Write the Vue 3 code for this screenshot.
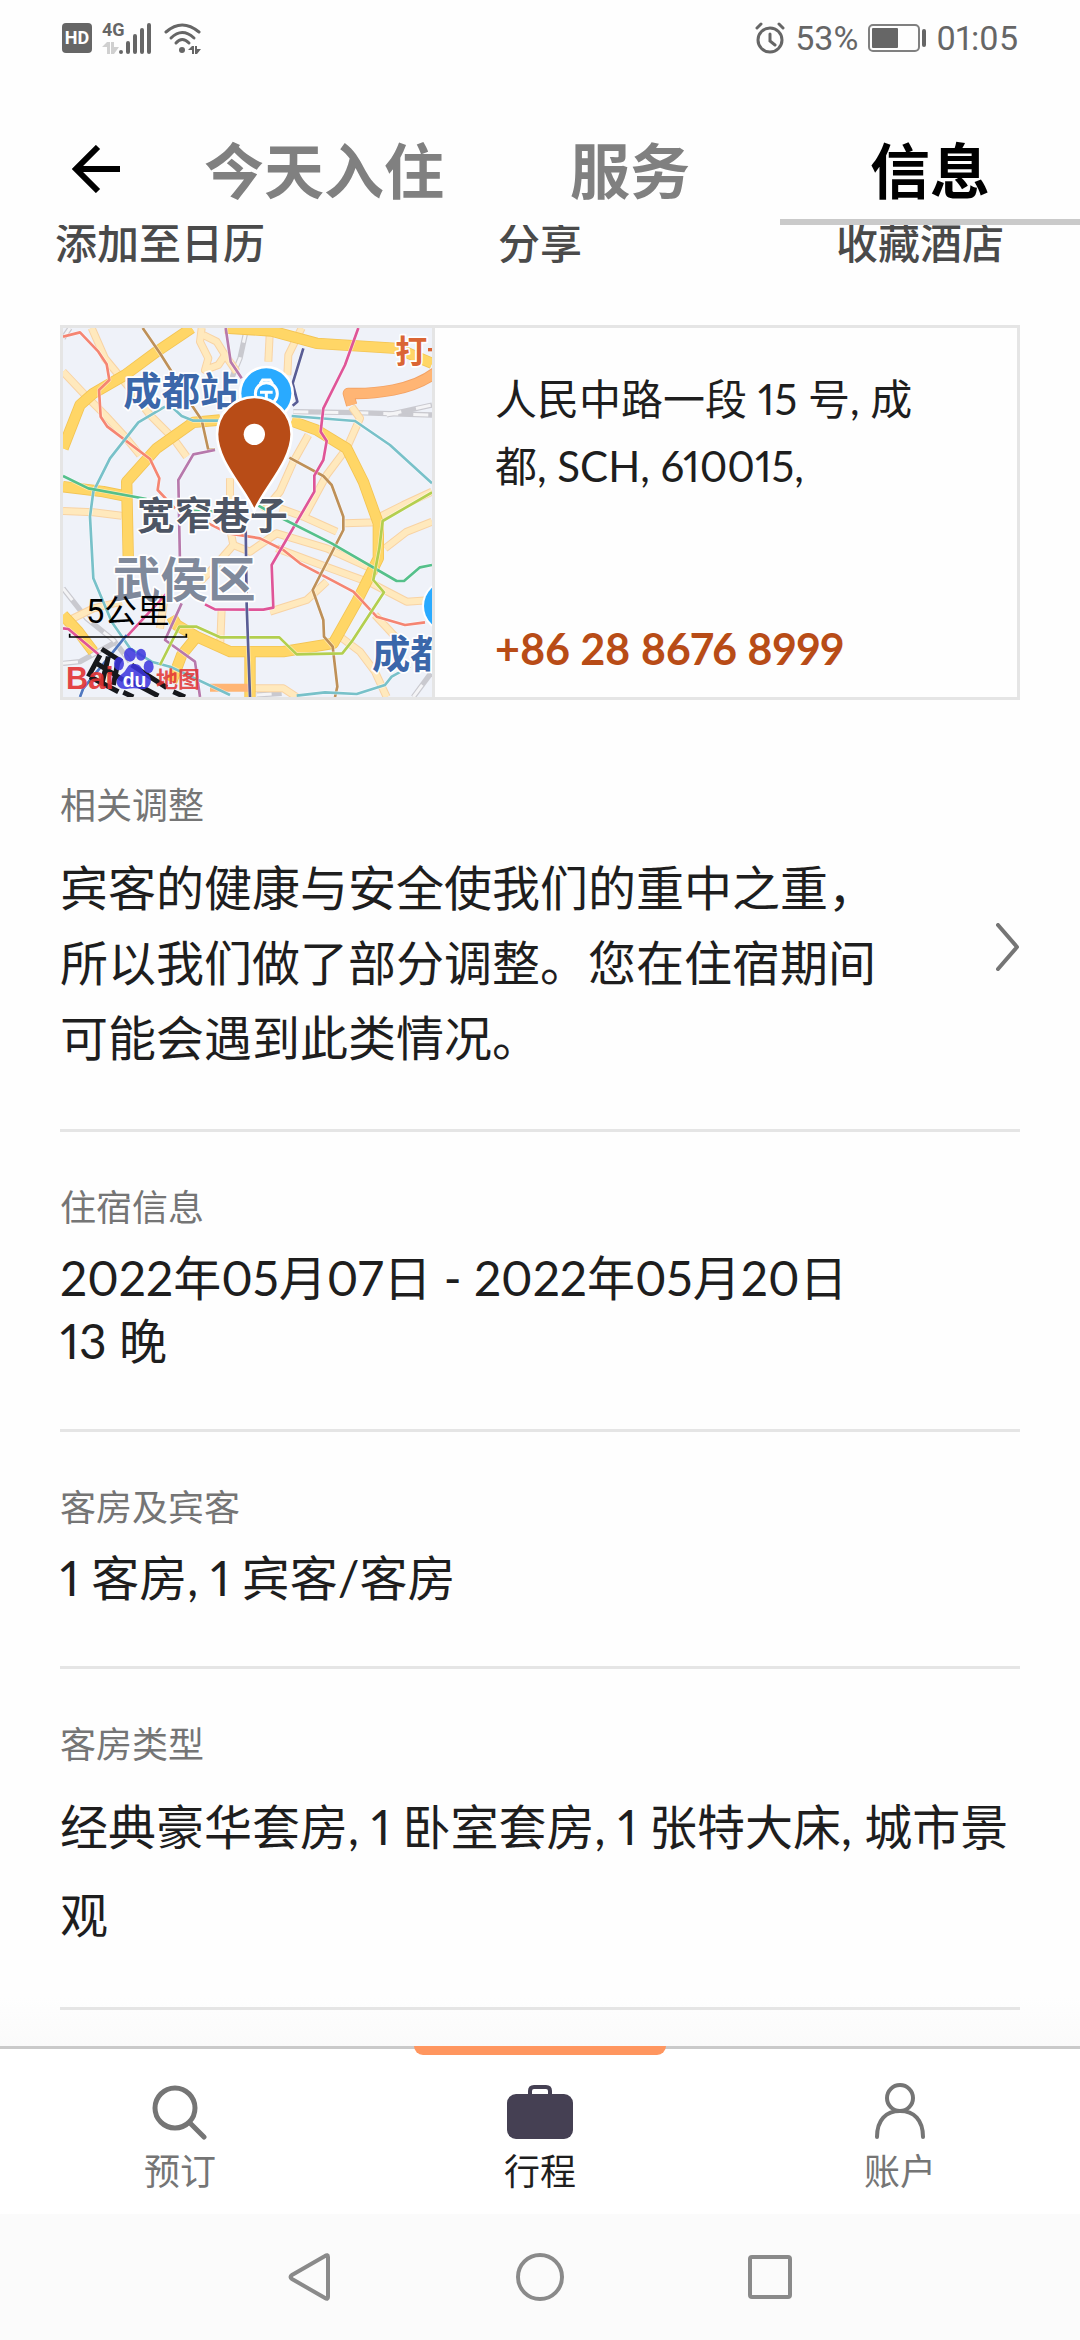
<script setup>
import { ref } from 'vue'

const activeTab = ref('info')
const activeNav = ref('trips')

const tabs = [
  { id: 'stay', label: '今天入住' },
  { id: 'service', label: '服务' },
  { id: 'info', label: '信息' }
]

const actions = ['添加至日历', '分享', '收藏酒店']

const navItems = [
  { id: 'book', label: '预订' },
  { id: 'trips', label: '行程' },
  { id: 'account', label: '账户' }
]

const minorRoads = [
  'M39 170 L110 245 L165 300 L225 365 L270 420',
  'M125 39 L165 130 L235 215 L300 300 L370 370 L410 425',
  'M455 39 L450 80 L475 130 L465 165 L505 150 L525 120 L500 80 L460 60',
  'M525 120 L560 170',
  'M660 39 L655 140',
  'M755 39 L715 120 L712 180',
  'M905 275 L930 310 L890 400 L830 480 L765 600',
  'M775 360 L730 440 L690 530 L640 590',
  'M39 588 L130 592 L215 602',
  'M39 925 L130 880 L215 860',
  'M345 840 L330 940',
  'M540 490 L540 640 L550 690 L480 770 L420 830',
  'M550 690 L600 710 L680 655 L830 700 L985 770',
  'M690 580 L760 605 L860 650',
  'M680 700 L800 745 L965 805 L1070 860 L1146 855',
  'M660 890 L770 855 L830 800',
  'M885 625 L985 622',
  'M1005 700 L1070 650 L1146 620',
  'M515 880 L510 1005',
  'M870 965 L930 1010 L975 1070 L1010 1146',
  'M975 900 L1040 970',
  'M980 610 L1060 570 L1146 530',
  'M610 1120 L700 1120 L740 1146'
]

const majorRoads = [
  'M39 400 L90 270 L130 235 L225 180 L320 110 L425 39',
  'M525 39 L665 48 L800 85 L1040 100 L1146 145',
  'M235 740 L230 500 L320 400 L430 322 L510 315',
  'M725 318 L800 345 L890 400 L940 500 L985 625 L985 730 L920 860 L850 985 L700 1010 L540 1010 L440 965 L380 930 L365 905',
  'M39 515 L160 530 L235 545',
  'M440 965 L395 1020 L365 1100',
  'M600 1000 L600 1146',
  'M39 900 L85 950 L130 1010'
]

const railways = [
  'M590 39 L570 130 L545 190',
  'M730 290 L920 293 L1146 300',
  'M1010 300 L1146 270',
  'M39 820 L110 910 L190 975 L240 1040',
  'M39 1045 L90 1040 L190 985',
  'M39 70 L60 39',
  'M1090 1146 L1146 1070',
  'M620 1140 L695 1135'
]

const metroLines = [
  { color: '#f58572', d: 'M39 65 L90 52 L145 110 L170 148 L178 195 L147 225 L152 305 L172 335 L300 432 L328 490 L323 525 L375 580 M475 625 L535 655 L630 670 L700 705 L750 745 L910 830 L980 905 L1065 930 L1125 922' },
  { color: '#be9058', d: 'M278 39 L330 115 L365 170 M425 270 L455 315 L475 405 L495 403 M718 428 L820 483 L845 510 L880 605 L880 645 L788 825 L820 915 L822 965 L848 995 L862 1115 L855 1146' },
  { color: '#b779ac', d: 'M527 39 L542 140 L575 190 M495 405 L430 418 L385 495 L390 745 M395 865 L345 975 L435 1040 L450 1146' },
  { color: '#78c1c9', d: 'M345 275 L265 322 L180 430 L130 530 L120 605 L130 790 L185 920 L240 1000 L305 1040 L360 1055 L540 1140 M370 280 L395 303 L430 317 L510 317 M725 303 L915 318 L1020 390 L1146 505 M740 1142 L825 1132 L920 1137 L1005 1110 L1025 1085 L1080 1055' },
  { color: '#df5598', d: 'M925 39 L885 150 L820 280 L812 350 L830 378 L820 435 L793 482 L793 530 L665 750 L670 878 L640 884 L495 883 L465 868 M39 940 L55 942 L145 1018 M350 835 L230 965' },
  { color: '#55c08b', d: 'M39 483 L115 520 L290 552 M415 587 L490 590 M625 572 L700 612 L845 685 L1040 798 L1062 798 L1110 757 L1146 750' },
  { color: '#b3cf4f', d: 'M1146 532 L998 618 L988 700 L970 795 L1002 832 L905 980 L877 1015 L740 1018 L688 967 L510 967 L440 935 L388 935 L330 1050' },
  { color: '#595d95', d: 'M760 100 L728 205 L742 260 L728 272 M587 630 L590 870 L600 1146' },
  { color: '#5078c0', d: 'M230 960 L190 1010 L100 1120 L90 1146' }
]
</script>

<template>
  <div class="screen">
    <header class="top">
      <div class="status-bar">
        <div class="status-group">
          <span class="hd">HD</span>
          <svg class="signal" viewBox="0 0 52 34" aria-hidden="true">
            <text x="0" y="15" class="signal-text">4G</text>
            <path fill="#d0d0d0" d="M5 21 h3 v12 h-3 v-7 h-5z M9 21 h3 v5 h5 l-5 7 h-3z" />
            <path d="M19 31 v0 M26 22 v9 M33 15 v16 M40 9 v22 M47 4 v27" stroke="#666" stroke-width="4" stroke-linecap="round" fill="none" />
          </svg>
          <svg class="wifi" viewBox="0 0 38 34" aria-hidden="true">
            <g fill="none" stroke="#666" stroke-width="3" stroke-linecap="round">
              <path d="M2 11 Q18 -3 35 11" />
              <path d="M7 17 Q18 6 30 17" />
              <path d="M12 22 Q18 15 25 22" />
            </g>
            <circle cx="18" cy="29" r="3" fill="#666" />
            <path fill="#666" d="M28 25 h2 v8 h-2 v-4 h-4z M31 25 h2 v3 h4 l-4 5 h-2z" />
          </svg>
        </div>
        <div class="status-group">
          <svg class="alarm" viewBox="0 0 30 32" aria-hidden="true">
            <g fill="none" stroke="#666" stroke-width="3" stroke-linecap="round">
              <circle cx="15" cy="18" r="12" />
              <path d="M15 12 v7 l5 4 M2 6 l4 -4 M24 2 l4 4" />
            </g>
          </svg>
          <span>53%</span>
          <svg class="battery" viewBox="0 0 58 28" aria-hidden="true">
            <rect x="1" y="1" width="50" height="26" rx="4" fill="none" stroke="#808080" stroke-width="2" />
            <rect x="4" y="4" width="26" height="20" rx="1" fill="#666" />
            <rect x="54" y="5" width="4" height="18" rx="2" fill="#666" />
          </svg>
          <time>01:05</time>
        </div>
      </div>
      <nav class="tabs">
        <button class="back" type="button" aria-label="返回">
          <svg viewBox="0 0 48 48" aria-hidden="true">
            <path d="M48 24 H5 M26 2 L4 24 L26 46" fill="none" stroke="#000" stroke-width="6" />
          </svg>
        </button>
        <button
          v-for="t in tabs"
          :key="t.id"
          type="button"
          class="tab"
          :class="{ active: activeTab === t.id }"
          @click="activeTab = t.id"
        >{{ t.label }}</button>
      </nav>
    </header>

    <main class="content">
      <div class="actions">
        <button v-for="a in actions" :key="a" type="button" class="action">{{ a }}</button>
      </div>

      <section class="hotel-card">
        <svg class="map" viewBox="39 39 1107 1107" role="img" aria-label="地图">
          <rect x="39" y="39" width="1107" height="1107" fill="#eff2f9" />
          <g class="roads">
            <path v-for="d in railways" :key="d" :d="d" stroke="#c9c9cf" stroke-width="16" />
            <path v-for="d in railways" :key="'in' + d" :d="d" stroke="#f4f4f6" stroke-width="9" stroke-dasharray="45 45" />
            <path v-for="d in minorRoads" :key="d" :d="d" stroke="#f8d3a4" stroke-width="24" />
            <path v-for="d in minorRoads" :key="'in' + d" :d="d" stroke="#ffe9bd" stroke-width="18" />
            <path v-for="d in majorRoads" :key="d" :d="d" stroke="#f3c454" stroke-width="34" />
            <path v-for="d in majorRoads" :key="'in' + d" :d="d" stroke="#ffd666" stroke-width="29" />
            <path d="M1160 170 Q1110 210 1030 225 Q960 238 895 235 L905 270" stroke="#f3a264" stroke-width="34" />
            <path d="M1160 170 Q1110 210 1030 225 Q960 238 895 235 L905 270" stroke="#ffb574" stroke-width="29" />
            <path d="M480 1118 L600 1118" stroke="#ffb574" stroke-width="24" />
            <g v-for="m in metroLines" :key="m.color">
              <path :d="m.d" stroke="#fff" stroke-width="12" opacity="0.5" />
              <path :d="m.d" :stroke="m.color" stroke-width="8" />
            </g>
          </g>
          <g class="map-labels">
            <text x="220" y="271" font-size="115" fill="#3b67aa">成都站</text>
            <text x="261" y="641" font-size="113" fill="#4d5564">宽窄巷子</text>
            <text x="188" y="847" font-size="143" fill="#7f899b">武侯区</text>
            <text x="1036" y="143" font-size="96" fill="#da6534">打</text>
            <text x="966" y="1060" font-size="115" fill="#3b67aa">成都</text>
          </g>
          <path d="M1134 104 h12" stroke="#da6534" stroke-width="10" />
          <circle cx="1196" cy="873" r="80" fill="#fff" />
          <circle cx="1196" cy="873" r="74" fill="#29aaff" />
          <circle cx="649" cy="235" r="83" fill="#fff" />
          <circle cx="649" cy="235" r="75" fill="#29aaff" />
          <g fill="none" stroke="#fff" stroke-width="9">
            <circle cx="649" cy="236" r="33" />
            <path d="M630 207 l8 -12 h22 l8 12 M630 232 h38 M649 232 v20" />
          </g>
          <path d="M613 588 C585 520 501 440 501 358 A112 112 0 0 1 725 358 C725 440 641 520 613 588z" fill="#b84c17" stroke="#fff" stroke-width="8" />
          <circle cx="613" cy="358" r="32" fill="#fff" />
          <g fill="none" stroke="#16181c" stroke-width="15">
            <path d="M155 1002 L215 1040 M150 1020 L115 1085 M135 1042 L220 1095 M175 1025 L155 1110 M205 1035 L190 1110 M120 1085 L205 1130 M245 1050 L350 1118 M235 1095 L325 1143 M220 1132 L250 1146 M370 1130 L405 1146" />
          </g>
          <g fill="#3c35df" opacity="0.86">
            <ellipse cx="240" cy="1019" rx="18" ry="21" />
            <ellipse cx="273" cy="1019" rx="15" ry="18" />
            <ellipse cx="207" cy="1046" rx="15" ry="20" />
            <ellipse cx="296" cy="1055" rx="15" ry="19" />
            <path d="M250 1047 C280 1047 270 1065 295 1080 C312 1094 298 1126 275 1122 Q250 1118 230 1122 C200 1126 190 1095 212 1080 C235 1065 228 1047 250 1047z" />
          </g>
          <text x="48" y="1121" class="logo-text" font-size="92" fill="#e23232" opacity="0.9">Bai</text>
          <text x="218" y="1117" class="logo-text" font-size="58" fill="#fff">du</text>
          <text x="318" y="1117" class="logo-text" font-size="66" fill="#e23232" opacity="0.85">地图</text>
          <text x="108" y="924" class="scale-text" font-size="98">5公里</text>
          <path d="M59 956 V966 H409 V956" fill="none" stroke="#000" stroke-width="5" />
        </svg>
        <div class="hotel-info">
          <address class="address">人民中路一段 15 号, 成都, SCH, 610015,</address>
          <a class="phone" href="tel:+862886768999">+86 28 8676 8999</a>
        </div>
      </section>

      <section class="row notice">
        <div>
          <h2 class="label">相关调整</h2>
          <p class="notice-text">宾客的健康与安全使我们的重中之重，所以我们做了部分调整。您在住宿期间可能会遇到此类情况。</p>
        </div>
        <button class="more" type="button" aria-label="查看详情">
          <svg viewBox="0 0 24 48" aria-hidden="true">
            <path d="M2 2 L21 24 L2 46" fill="none" stroke="#757575" stroke-width="4" stroke-linecap="round" stroke-linejoin="round" />
          </svg>
        </button>
      </section>

      <section class="row">
        <h2 class="label">住宿信息</h2>
        <p class="value">2022年05月07日 - 2022年05月20日</p>
        <p class="value">13 晚</p>
      </section>

      <section class="row">
        <h2 class="label">客房及宾客</h2>
        <p class="value">1 客房, 1 宾客/客房</p>
      </section>

      <section class="row room">
        <h2 class="label">客房类型</h2>
        <p class="value">经典豪华套房, 1 卧室套房, 1 张特大床, 城市景观</p>
      </section>
    </main>

    <footer>
      <nav class="bottom-nav">
        <button
          v-for="n in navItems"
          :key="n.id"
          type="button"
          class="nav-item"
          :class="{ active: activeNav === n.id }"
          @click="activeNav = n.id"
        >
          <svg v-if="n.id === 'book'" viewBox="0 0 66 58" aria-hidden="true">
            <g fill="none" stroke="#757575" stroke-width="5" stroke-linecap="round">
              <circle cx="28" cy="26" r="20" />
              <path d="M43 41 L57 55" />
            </g>
          </svg>
          <svg v-else-if="n.id === 'trips'" viewBox="0 0 66 58" aria-hidden="true">
            <rect x="0" y="12" width="66" height="45" rx="9" fill="#454053" />
            <path d="M23 14 V9 Q23 5 27 5 H39 Q43 5 43 9 V14" fill="none" stroke="#454053" stroke-width="4" />
          </svg>
          <svg v-else viewBox="0 0 66 58" aria-hidden="true">
            <g fill="none" stroke="#757575" stroke-width="4" stroke-linecap="round">
              <circle cx="33" cy="16" r="13" />
              <path d="M10 55 C10 38 19 29 33 29 C47 29 56 38 56 55" />
            </g>
          </svg>
          <span>{{ n.label }}</span>
        </button>
      </nav>
      <div class="system-nav">
        <button type="button" aria-label="返回">
          <svg viewBox="0 0 48 48" aria-hidden="true">
            <path d="M42 4 V44 Q42 47 39 45 L6 26 Q3 24 6 22 L39 3 Q42 1 42 4z" />
          </svg>
        </button>
        <button type="button" aria-label="主屏幕">
          <svg viewBox="0 0 48 48" aria-hidden="true"><circle cx="24" cy="24" r="22" /></svg>
        </button>
        <button type="button" aria-label="最近任务">
          <svg viewBox="0 0 48 48" aria-hidden="true"><rect x="4" y="4" width="40" height="40" rx="2" /></svg>
        </button>
      </div>
    </footer>
  </div>
</template>

<style>
body {
  margin: 0;
  background: #fff;
}
</style>

<style scoped>
.screen {
  min-height: 100vh;
  display: flex;
  flex-direction: column;
  background: #fefefe;
  color: #1e1e1e;
  font-family: Lato, "Noto Sans CJK SC", sans-serif;
  font-variant-numeric: proportional-nums;
}
button {
  border: none;
  background: none;
  padding: 0;
  color: inherit;
  font: inherit;
  cursor: pointer;
}
svg {
  display: block;
}
h2, p {
  margin: 0;
}

.top {
  position: relative;
  z-index: 1;
  background: #fefefe;
}
.status-bar {
  display: flex;
  justify-content: space-between;
  align-items: center;
  height: 76px;
  padding: 0 62px;
  color: #666;
  font-family: Roboto, sans-serif;
  font-size: 34px;
}
.status-group {
  display: flex;
  align-items: center;
  gap: 10px;
}
.hd {
  width: 30px;
  height: 30px;
  border-radius: 4px;
  background: #666;
  color: #fff;
  font-size: 18px;
  font-weight: 700;
  line-height: 30px;
  text-align: center;
}
.signal {
  width: 52px;
  height: 34px;
}
.signal-text {
  font-size: 18px;
  font-weight: 700;
  fill: #666;
}
.wifi {
  width: 38px;
  height: 34px;
}
.alarm {
  width: 30px;
  height: 32px;
}
.battery {
  width: 58px;
  height: 28px;
}

.tabs {
  display: grid;
  grid-template-columns: 168px 312fr 300fr 300fr;
  height: 149px;
}
.back {
  padding: 42px 0 6px 72px;
}
.back svg {
  width: 48px;
  height: 48px;
}
.tab {
  padding-top: 46px;
  border-bottom: 6px solid transparent;
  font-size: 60px;
  font-weight: 700;
  line-height: 80px;
  color: #808080;
}
.tab.active {
  border-bottom-color: #cacaca;
  color: #000;
}

.content {
  flex: 1;
  padding: 0 60px;
  background: linear-gradient(to top, #fafafa, #fefefe 48px);
}
/* the action row is scrolled partly under the header */
.actions {
  display: grid;
  grid-template-columns: repeat(3, 1fr);
  gap: 60px;
  margin: -12px -60px 52px;
}
.action {
  font-size: 42px;
  font-weight: 500;
  line-height: 60px;
  color: #4a4a4a;
}

.hotel-card {
  display: flex;
  border: 3px solid #e5e5e5;
}
.map {
  flex: none;
  width: 369px;
  height: 369px;
  border-right: 3px solid #e5e5e5;
}
.roads path {
  fill: none;
  stroke-linejoin: round;
}
.map-labels text {
  font-weight: 700;
  stroke: #fff;
  stroke-width: 10px;
  stroke-linejoin: round;
  paint-order: stroke;
}
.logo-text {
  font-family: "Liberation Sans", "Noto Sans CJK SC", sans-serif;
  font-weight: 700;
}
.scale-text {
  font-family: Roboto, "Noto Sans CJK SC", sans-serif;
}
.hotel-info {
  flex: 1;
  display: flex;
  flex-direction: column;
  justify-content: space-between;
  padding: 38px 60px 18px;
  font-size: 42px;
}
.address {
  max-width: 430px;
  font-style: normal;
  line-height: 67px;
}
.phone {
  color: #b84c17;
  font-size: 43px;
  font-weight: 700;
  line-height: 60px;
  text-decoration: none;
}

.row {
  padding: 48px 0 57px;
  border-bottom: 3px solid #e5e5e5;
}
.label {
  margin-bottom: 12px;
  color: #757575;
  font-size: 36px;
  font-weight: 400;
  line-height: 54px;
}
.notice {
  display: flex;
  align-items: center;
  justify-content: space-between;
  padding: 78px 0 54px;
}
.notice .label {
  margin-bottom: 18px;
}
.notice-text {
  max-width: 830px;
  font-size: 48px;
  line-height: 75px;
}
.more {
  padding-top: 40px;
}
.more svg {
  width: 24px;
  height: 48px;
}
.value {
  font-size: 48px;
  line-height: 63px;
}
.room {
  padding-bottom: 48px;
}
.room .value {
  line-height: 88px;
}

.bottom-nav {
  display: grid;
  grid-template-columns: repeat(3, 1fr);
  height: 165px;
  border-top: 3px solid #cacaca;
  background: #fff;
}
.nav-item {
  position: relative;
  display: flex;
  flex-direction: column;
  align-items: center;
  padding-top: 33px;
  color: #757575;
  font-size: 36px;
  line-height: 63px;
}
.nav-item svg {
  width: 66px;
  height: 58px;
}
.nav-item.active {
  color: #1e1e1e;
}
.nav-item.active::before {
  content: "";
  position: absolute;
  top: -3px;
  left: 15%;
  width: 70%;
  height: 9px;
  border-radius: 0 0 9px 9px;
  background: #ff965f;
}
.system-nav {
  display: flex;
  justify-content: center;
  gap: 182px;
  height: 126px;
  background: #fbfbfb;
}
.system-nav svg {
  width: 48px;
  height: 48px;
  fill: none;
  stroke: #8a8a8a;
  stroke-width: 4px;
}
</style>
